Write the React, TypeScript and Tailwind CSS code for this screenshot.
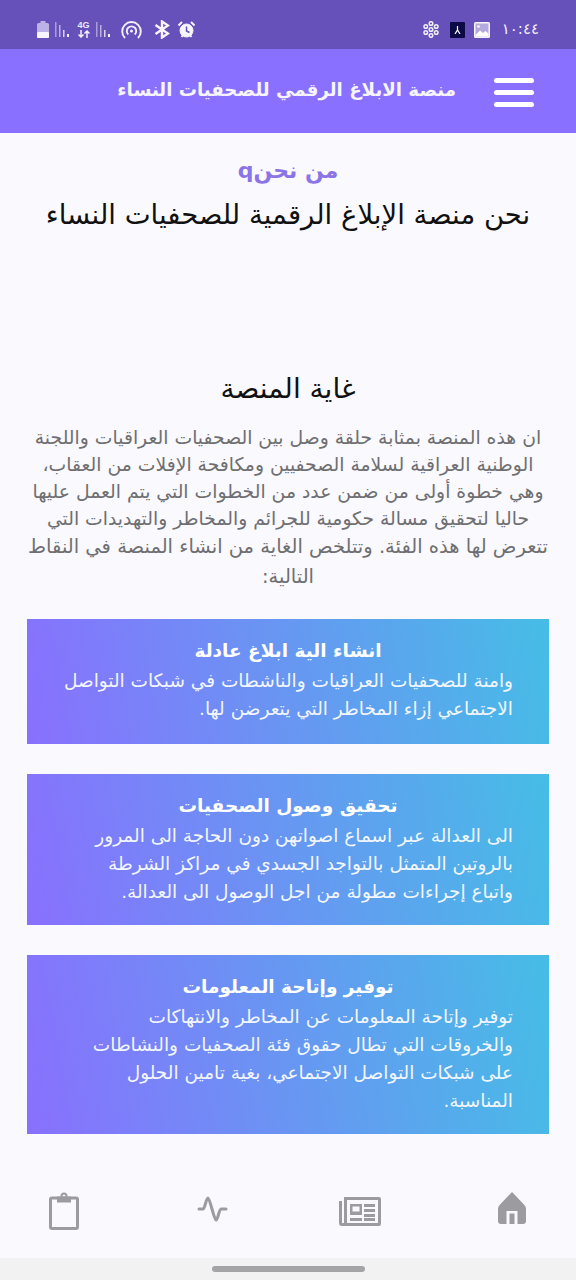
const arabic = "font-['DejaVu_Sans','Noto_Sans',sans-serif]";

const cards = [
  {
    title: "انشاء الية ابلاغ عادلة",
    lines: ["وامنة للصحفيات العراقيات والناشطات في شبكات التواصل", "الاجتماعي إزاء المخاطر التي يتعرضن لها."],
    height: "h-[125px]",
  },
  {
    title: "تحقيق وصول الصحفيات",
    lines: [
      "الى العدالة عبر اسماع اصواتهن دون الحاجة الى المرور",
      "بالروتين المتمثل بالتواجد الجسدي في مراكز الشرطة",
      "واتباع إجراءات مطولة من اجل الوصول الى العدالة.",
    ],
    height: "h-[151px]",
  },
  {
    title: "توفير وإتاحة المعلومات",
    lines: [
      "توفير وإتاحة المعلومات عن المخاطر والانتهاكات",
      "والخروقات التي تطال حقوق فئة الصحفيات والنشاطات",
      "على شبكات التواصل الاجتماعي، بغية تامين الحلول",
      "المناسبة.",
    ],
    height: "h-[179px]",
  },
];

const intro = [
  "ان هذه المنصة بمثابة حلقة وصل بين الصحفيات العراقيات واللجنة",
  "الوطنية العراقية لسلامة الصحفيين ومكافحة الإفلات من العقاب،",
  "وهي خطوة أولى من ضمن عدد من الخطوات التي يتم العمل عليها",
  "حاليا لتحقيق مسالة حكومية للجرائم والمخاطر والتهديدات التي",
  "تتعرض لها هذه الفئة. وتتلخص الغاية من انشاء المنصة في النقاط",
  "التالية:",
];

function Bars() {
  return (
    <svg width="14" height="15" viewBox="0 0 14 15">
      <rect x="0" y="0" width="1.500" height="15" fill="#a99dd9" />
      <rect x="4" y="3" width="1.500" height="12" fill="#b9afe2" />
      <rect x="8" y="8" width="1.500" height="7" fill="#d9d4f0" />
      <rect x="12" y="12" width="2" height="3" fill="#f2f0fb" />
    </svg>
  );
}

function StatusBar() {
  return (
    <div dir="ltr" className="flex h-[49px] items-center justify-between bg-[#6650ba] pt-[10px] pr-[37px] pl-[37px] text-[#eceaf8]">
      <div className="flex items-center">
        <svg width="12" height="17" viewBox="0 0 12 17">
          <rect x="0" y="2" width="12" height="15" rx="1.500" fill="#bdb2e6" />
          <rect x="3.500" y="0" width="5" height="3" fill="#bdb2e6" />
          <rect x="0" y="11" width="12" height="6" rx="1" fill="#f6f4fc" />
        </svg>
        <div className="ml-[6px]">
          <Bars />
        </div>
        <div className="ml-[8px] flex w-[13px] flex-col items-center">
          <span className="font-['Liberation_Sans',sans-serif] text-[9px] leading-[9px] font-bold">4G</span>
          <svg width="12" height="8" viewBox="0 0 12 8" fill="none" stroke="#f2f0fb" strokeWidth="1.500">
            <path d="M3 0v7M.5 4.500L3 7l2.500-2.500M9 8V1M6.500 3.500L9 1l2.500 2.500" />
          </svg>
        </div>
        <div className="ml-[6px]">
          <Bars />
        </div>
        <svg width="21" height="20" viewBox="0 0 21 20" fill="none" stroke="#f2f0fb" strokeWidth="1.900" className="ml-[11px]">
          <path d="M4 18a9.300 9.300 0 1 1 13 0" />
          <path d="M7.300 14.500a4.700 4.700 0 1 1 6.400 0" />
          <circle cx="10.500" cy="11" r="1.500" fill="#f2f0fb" stroke="none" />
        </svg>
        <svg width="16" height="19" viewBox="0 0 16 19" className="ml-[12px]">
          <path
            d="M8 9.500L1.500 5M8 9.500L1.500 14M8 9.500L14 5.500 8 1.500v16l6-4z"
            fill="none"
            stroke="#f6f4fc"
            strokeWidth="2.400"
          />
        </svg>
        <svg width="19" height="19" viewBox="0 0 19 19" fill="none" stroke="#f6f4fc" className="ml-[7px]">
          <circle cx="9.500" cy="10.500" r="6.500" fill="#f6f4fc" />
          <path d="M9.500 6.500v4.500l3 1.500" stroke="#6650ba" strokeWidth="1.500" />
          <path d="M1.500 5.500l3.500-3.500M17.500 5.500L14 2M4.500 17l1.500-2M14.500 17L13 15" strokeWidth="2" />
        </svg>
      </div>
      <div className="flex items-center">
        <svg width="16" height="17" viewBox="0 0 16 17" fill="none" stroke="#f2f0fb" strokeWidth="1.500" className="mr-[1px]">
          <circle cx="8" cy="8.500" r="1.800" />
          <circle cx="8" cy="2.500" r="1.800" />
          <circle cx="13.200" cy="5.500" r="1.800" />
          <circle cx="13.200" cy="11.500" r="1.800" />
          <circle cx="8" cy="14.500" r="1.800" />
          <circle cx="2.800" cy="11.500" r="1.800" />
          <circle cx="2.800" cy="5.500" r="1.800" />
        </svg>
        <div className="ml-[10px] flex h-[16px] w-[15px] items-center justify-center rounded-[1px] bg-[#0b0a45]">
          <svg width="7" height="8" viewBox="0 0 7 8" fill="none" stroke="#fff" strokeWidth="1.200">
            <path d="M3.500 0v4M1 8l2.500-4L6 8" />
          </svg>
        </div>
        <svg width="16" height="16" viewBox="0 0 16 16" className="ml-[9px]">
          <rect width="16" height="16" rx="1.500" fill="#f6f4fc" />
          <rect x="1.500" y="1.500" width="13" height="13" fill="#6650ba" opacity="0.450" />
          <path d="M1.500 13L6 8.500l3 2.500 2.500-2 3 2.500V14.500h-13z" fill="#fff" />
          <circle cx="4.500" cy="4.500" r="1.300" fill="#fff" />
        </svg>
        <span className={`ml-[12px] text-[15px] leading-none text-[#f2f0fb] ${arabic}`}>١٠:٤٤</span>
      </div>
    </div>
  );
}

export default function App() {
  return (
    <div dir="rtl" className={`flex h-[1280px] w-[576px] flex-col overflow-hidden bg-[#f9f9fe] ${arabic}`}>
      <StatusBar />

      {/* Header */}
      <div className="flex h-[84px] items-center bg-[#8970fe] pr-[42px]">
        <div className="mt-[2px] flex w-[40px] flex-col gap-[7px]">
          <div className="h-[5px] rounded-full bg-white" />
          <div className="h-[5px] rounded-full bg-white" />
          <div className="h-[5px] rounded-full bg-white" />
        </div>
        <h1 className="mr-[38px] mb-[3px] text-[18.200px] font-bold text-[#f6f4ff]">منصة الابلاغ الرقمي للصحفيات النساء</h1>
      </div>

      {/* Content */}
      <main className="flex-1 px-[27px]">
        <h2 className="mt-[20px] text-center text-[22px] leading-[36px] font-bold text-[#8b74e6]">من نحنq</h2>
        <p className="mt-[7px] text-center text-[27.500px] leading-[36px] text-[#111]">نحن منصة الإبلاغ الرقمية للصحفيات النساء</p>
        <h2 className="mt-[139px] text-center text-[28px] leading-[36px] text-[#111]">غاية المنصة</h2>
        <div className="mt-[17px] text-center whitespace-nowrap text-[#6f6f72]">
          {intro.map((line, i) => (
            <div key={i} className={i >= 4 ? "text-[19.500px] leading-[30px]" : "text-[18.800px] leading-[27px]"}>
              {line}
            </div>
          ))}
        </div>

        <div className="mt-[27px] flex flex-col gap-[30px]">
          {cards.map((card) => (
            <div
              key={card.title}
              className={`bg-[linear-gradient(80deg,#8970fe,#46bde6)] px-[36px] pt-[18px] text-white ${card.height}`}
            >
              <h3 className="mb-[2px] text-center text-[18.500px] leading-[28px] font-bold">{card.title}</h3>
              {card.lines.map((line) => (
                <div key={line} className="text-[18.500px] leading-[28px] whitespace-nowrap text-[#f2f6fe]">
                  {line}
                </div>
              ))}
            </div>
          ))}
        </div>
      </main>

      {/* Bottom tabs */}
      <nav dir="ltr" className="flex h-[77px] items-center pb-[18px] pl-[49px]">
        <svg width="30" height="38" viewBox="0 0 30 38" fill="none" stroke="#9b9ba0" strokeWidth="3">
          <rect x="1.500" y="6" width="27" height="30.500" rx="1.500" />
          <path d="M8 7.500h14" strokeWidth="6" />
          <circle cx="15" cy="4" r="2.500" strokeWidth="2" />
        </svg>
        <svg width="32" height="28" viewBox="0 0 32 28" fill="none" stroke="#9b9ba0" strokeWidth="3" strokeLinecap="round" strokeLinejoin="round" className="ml-[118px] mb-[3px]">
          <path d="M2 14h4c2 0 3-11 5-11s6 22 8 22 3-11 5-11h5" />
        </svg>
        <svg width="42" height="30" viewBox="0 0 42 30" className="ml-[110px]">
          <path fillRule="evenodd" d="M5 1h35a2 2 0 0 1 2 2v25a2 2 0 0 1-2 2H3a3 3 0 0 1-3-3V5h3v22h2z M8 4v23h31V4z" fill="#9b9ba0" />
          <path fillRule="evenodd" d="M11 8h12v11H11z M13.500 10.500v5h7v-5z" fill="#9b9ba0" />
          <path d="M25 8h11v3H25zM25 13h11v3H25zM25 18h11v3H25zM11 22h12v3H11zM25 22h11v3H25z" fill="#9b9ba0" />
        </svg>
        <svg width="30" height="32" viewBox="0 0 30 32" className="ml-[116px] mb-[6px]">
          <path fillRule="evenodd" d="M15 0L26 11.500c2 2 3 3.500 3 6V29a3 3 0 0 1-3 3H4a3 3 0 0 1-3-3V17.500c0-2.500 1-4 3-6z M9.500 32V19h11v13h-3V21.500h-5V32z" fill="#9b9ba0" />
        </svg>
      </nav>

      {/* Gesture bar */}
      <div className="flex h-[22px] items-start justify-center bg-[#f2f2f3] pt-[8px]">
        <div className="h-[6px] w-[153px] rounded-full bg-[#a4a4a6]" />
      </div>
    </div>
  );
}
